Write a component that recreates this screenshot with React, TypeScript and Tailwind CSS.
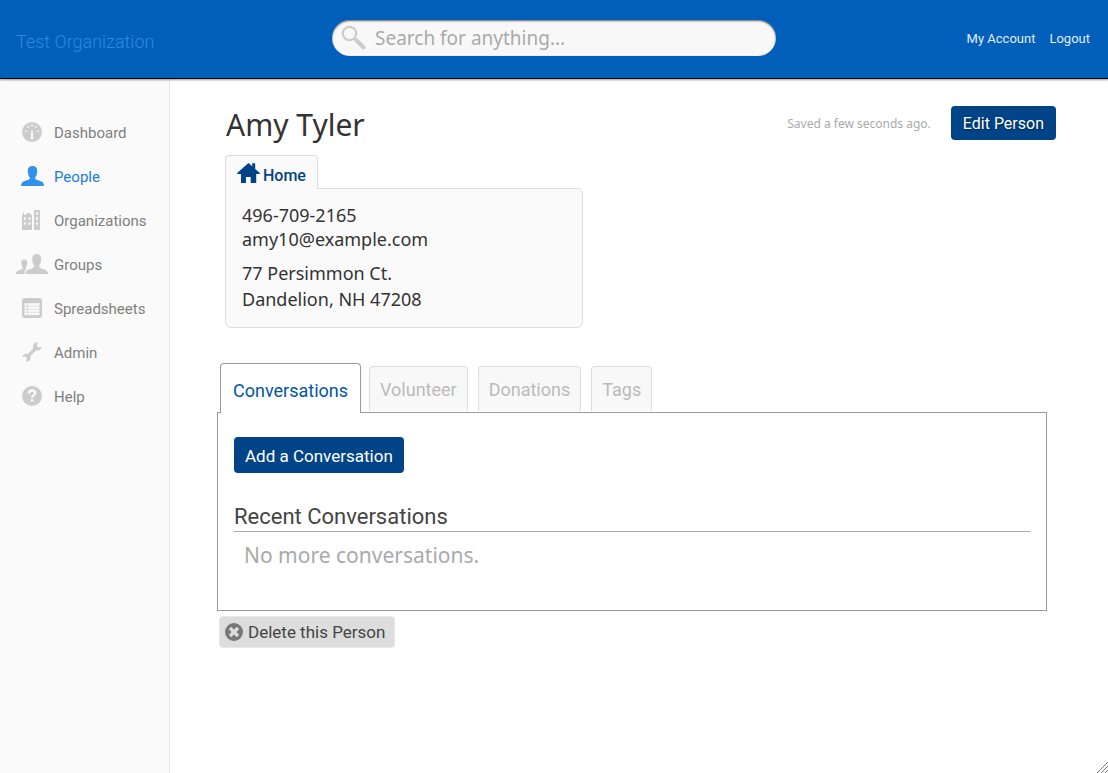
import React from "react";

type IconProps = { className?: string };

function DashboardIcon() {
  return (
    <svg width="20" height="20" viewBox="0 0 20 20" aria-hidden="true">
      <circle cx="10" cy="10" r="10" fill="currentColor" />
      <g fill="#fafafa">
        <path d="M9.6 7.5h.8l.9 8.6a1.3 1.3 0 0 1-2.6 0z" />
        <ellipse cx="10" cy="3.4" rx=".9" ry="1.1" />
        <circle cx="6.1" cy="5.1" r="1" />
        <circle cx="13.9" cy="5.1" r="1" />
        <ellipse cx="4.1" cy="9.2" rx="1.2" ry=".8" />
        <ellipse cx="15.9" cy="9.2" rx="1.2" ry=".8" />
      </g>
    </svg>
  );
}

function PersonIcon() {
  return (
    <svg width="24" height="20" viewBox="0 0 24 20" aria-hidden="true">
      <path
        fill="currentColor"
        d="M12.500 0c3.200 0 4.700 1.700 4.700 4.600 0 2.900-.6 5.600-2 7v1.200c1 1 3.100 1.500 5.200 2.300 2.500.9 3.600 2.400 3.600 4.900H1c0-2.500 1.100-4 3.600-4.900 2.100-.8 4.200-1.300 5.200-2.300v-1.200c-1.400-1.400-2-4.100-2-7C7.800 1.700 9.300 0 12.500 0z"
      />
    </svg>
  );
}

function BuildingsIcon() {
  return (
    <svg width="20" height="20" viewBox="0 0 20 20" aria-hidden="true">
      <path
        fill="currentColor"
        fillRule="evenodd"
        d="M0 5h1V2.500h1V5h2V4h1V3h3v1h1v1h1v15H0zM2 7.300v2.400h2V7.300zm4.500 0v2.400h2V7.300zM2 12.300v2.400h2v-2.400zm4.500 0v2.400h2v-2.400zM12 0h6v20h-6zM14 2.300v2.400h2V2.300zm0 5v2.400h2V7.300zm0 5v2.400h2v-2.400z"
      />
    </svg>
  );
}

function GroupIcon() {
  return (
    <svg width="32" height="20" viewBox="0 0 32 20" aria-hidden="true">
      <g fill="currentColor">
        <path d="M8.300 5.500c2 0 3.100 1.300 3.100 3.300 0 1.900-.6 3.500-1.500 4.500v1l.8.500c-1.600 1.200-2.300 2.700-2.400 5.200H0c0-2 1-3 2.500-3.500 1.700-.6 3.400-.9 4.200-2.200v-1c-.9-1-1.500-2.600-1.500-4.500 0-2 1.100-3.300 3.100-3.300z" />
        <path d="M20.700 0c3 0 4.500 1.900 4.500 4.700 0 2.800-.7 5.300-2 6.800v1.400c1 1.200 3.100 1.700 5.200 2.500 2.400.9 3.600 2.200 3.600 4.600H9.300c0-2.400 1.200-3.700 3.600-4.600 2.100-.8 4.300-1.300 5.300-2.500v-1.400c-1.300-1.500-2-4-2-6.800 0-2.800 1.500-4.700 4.500-4.700z" />
      </g>
    </svg>
  );
}

function SheetIcon() {
  return (
    <svg width="20" height="20" viewBox="0 0 20 20" aria-hidden="true">
      <rect width="20" height="20" rx="3" fill="currentColor" />
      <path fill="#fafafa" d="M2.500 5.200h15v12h-15z" />
      <path
        d="M2.500 8.200h15M2.500 11.200h15M2.500 14.200h15M5.500 5v12.500"
        stroke="currentColor"
        strokeWidth=".6"
      />
    </svg>
  );
}

function WrenchIcon() {
  return (
    <svg width="20" height="20" viewBox="0 0 20 20" aria-hidden="true">
      <path
        fill="currentColor"
        d="M16 .3c-2.800-.3-5 1.500-5 4.200 0 .8.200 1.300.4 1.900l-5.700 5.500c-2.300-.6-4.600.5-5.500 2.900l2.900-.2 1.800 1.700-.9 3.400c2.900.1 4.800-1.800 4.800-4.400 0-.6-.1-1-.3-1.500L14.100 8.300c2.500.8 5.200-.7 5.700-3.500l-3.100.7-2-1.700z"
      />
    </svg>
  );
}

function HelpIcon() {
  return (
    <svg width="20" height="20" viewBox="0 0 20 20" aria-hidden="true">
      <circle cx="10" cy="10" r="10" fill="currentColor" />
      <path
        d="M6.900 7.500c0-2 1.300-3 3.200-3 1.800 0 3 1 3 2.500 0 2.400-2.900 2.100-2.900 4.700"
        fill="none"
        stroke="#fafafa"
        strokeWidth="2.300"
      />
      <rect x="8.900" y="13.200" width="2.500" height="2.500" fill="#fafafa" />
    </svg>
  );
}

function SearchIcon({ className }: IconProps) {
  return (
    <svg className={className} width="26" height="26" viewBox="0 0 26 26" aria-hidden="true">
      <g fill="none" stroke="#cccccc">
        <circle cx="8.500" cy="8.500" r="6.700" strokeWidth="2.200" />
        <path d="M13 13.500l3 2.500" strokeWidth="2" />
        <path d="M15.500 15.500l7 6.700" strokeWidth="4.200" strokeLinecap="round" />
      </g>
    </svg>
  );
}

function HomeIcon() {
  return (
    <svg width="23" height="20" viewBox="0 0 23 20" aria-hidden="true">
      <path
        fill="currentColor"
        d="M11.500 0l3.700 3.300V.2h3v5.700l4.600 4.200v.9h-3.600v9h-5.500v-6H9v6H4v-9H.2v-.9z"
      />
    </svg>
  );
}

function RemoveIcon() {
  return (
    <svg width="18" height="18" viewBox="0 0 18 18" aria-hidden="true">
      <circle cx="9" cy="9" r="9" fill="#777777" />
      <path d="M5 5l8 8M13 5l-8 8" stroke="#dddddd" strokeWidth="3.400" />
    </svg>
  );
}

const navItems = [
  { label: "Dashboard", Icon: DashboardIcon },
  { label: "People", Icon: PersonIcon, active: true },
  { label: "Organizations", Icon: BuildingsIcon },
  { label: "Groups", Icon: GroupIcon },
  { label: "Spreadsheets", Icon: SheetIcon },
  { label: "Admin", Icon: WrenchIcon },
  { label: "Help", Icon: HelpIcon },
];

const otherTabs = ["Volunteer", "Donations", "Tags"];

function Header() {
  return (
    <header className="z-10 flex h-[79px] items-start border-b border-black bg-[#005fb8] font-['Roboto',sans-serif] shadow-[0_1px_2px_rgba(0,0,0,0.4)]">
      <div className="flex-1">
        <a
          href="#"
          className="block pt-7 pl-4 text-lg leading-7 font-light text-[#2a8ae6]"
        >
          Test Organization
        </a>
      </div>
      <form className="relative mt-5 w-[444px]" role="search">
        <SearchIcon className="absolute top-[5px] left-[9px]" />
        <input
          type="text"
          aria-label="Search"
          placeholder="Search for anything..."
          className="h-9 w-full rounded-full bg-[#f8f8f8] pr-4 pl-[43px] font-['Noto_Sans',sans-serif] text-[19px] text-[#333] shadow-[inset_0_1px_2px_rgba(0,0,0,0.6)] outline-none placeholder:text-[#aaaaaa]"
        />
      </form>
      <div className="flex-1">
        <nav className="flex justify-end gap-[14px] pt-[29px] pr-[18px] text-[13px] leading-5 text-[#e3edf7]">
          <a href="#">My Account</a>
          <a href="#">Logout</a>
        </nav>
      </div>
    </header>
  );
}

function Sidebar() {
  return (
    <nav className="w-[170px] shrink-0 border-r border-[#e8e8e8] bg-[#fafafa] pt-[31px] font-['Roboto',sans-serif]">
      <ul>
        {navItems.map(({ label, Icon, active }) => (
          <li key={label}>
            <a
              href="#"
              className={
                active
                  ? "flex h-11 items-center gap-[6px] pl-4 text-[15px] text-[#1a7cdc]"
                  : "flex h-11 items-center gap-[6px] pl-4 text-[15px] text-[#808080]"
              }
            >
              <span
                className={
                  active
                    ? "flex w-8 justify-center text-[#3391ee]"
                    : "flex w-8 justify-center text-[#cccccc]"
                }
              >
                <Icon />
              </span>
              <span className="pt-0.5">{label}</span>
            </a>
          </li>
        ))}
      </ul>
    </nav>
  );
}

function ContactCard() {
  return (
    <section className="mt-[15px] ml-2 w-[358px] max-w-full">
      <h2 className="relative -mb-px flex h-[34px] w-fit items-center gap-[3px] rounded-t border border-b-0 border-[#dddddd] bg-[#fafafa] px-[11px] pt-1 font-['Roboto',sans-serif] text-base font-medium text-[#004488]">
        <span className="pb-1">
          <HomeIcon />
        </span>
        <span className="pt-0.5">Home</span>
      </h2>
      <div className="rounded-md rounded-tl-none border border-[#dddddd] bg-[#fafafa] px-4 pt-[14px] pb-[15px] text-lg leading-6 text-[#333333]">
        <p>496-709-2165</p>
        <p>amy10@example.com</p>
        <address className="mt-[9px] leading-[26px] not-italic">
          77 Persimmon Ct.
          <br />
          Dandelion, NH 47208
        </address>
      </div>
    </section>
  );
}

function Activity() {
  return (
    <section className="mt-[35px] mr-[9px] font-['Roboto',sans-serif]">
      <div role="tablist" className="flex items-end pl-[3px]">
        <button
          type="button"
          role="tab"
          aria-selected="true"
          className="relative -mb-px mr-2 h-[50px] rounded-t border border-b-0 border-[#999999] bg-white px-3 pt-1 text-lg text-[#0055aa]"
        >
          Conversations
        </button>
        <div className="mb-px flex gap-[10px]">
          {otherTabs.map((tab) => (
            <button
              key={tab}
              type="button"
              role="tab"
              aria-selected="false"
              className="h-[45px] rounded-t border border-b-0 border-[#dddddd] bg-[#f8f8f8] px-[10px] pt-0.5 text-lg text-[#bbbbbb]"
            >
              {tab}
            </button>
          ))}
        </div>
      </div>
      <div role="tabpanel" className="border border-[#999999] px-4 pt-6 pb-[38px]">
        <button
          type="button"
          className="h-9 rounded bg-[#004488] px-[11px] pt-1 text-[17px] text-white"
        >
          Add a Conversation
        </button>
        <h2 className="mt-[30px] border-b border-[#aaaaaa] text-[22px] leading-7 text-[#444444]">
          Recent Conversations
        </h2>
        <p className="mt-[7px] pl-[10px] font-['Noto_Sans',sans-serif] text-[21px] leading-[33px] text-[#aaaaaa]">
          No more conversations.
        </p>
      </div>
      <button
        type="button"
        className="mt-[5px] ml-[2px] flex h-8 items-center gap-[5px] rounded-sm border border-[#e8e8e8] bg-[#dddddd] pr-[9px] pl-[5px] text-[17px] text-[#444444]"
      >
        <RemoveIcon />
        <span className="pt-0.5">Delete this Person</span>
      </button>
    </section>
  );
}

export default function App() {
  return (
    <div className="relative flex min-h-screen flex-col bg-white font-['Noto_Sans',sans-serif]">
      <Header />
      <div className="flex flex-1">
        <Sidebar />
        <main className="min-w-0 flex-1 pt-[27px] pr-[52px] pb-8 pl-[47px]">
          <div className="flex items-center pl-[9px]">
            <h1 className="flex-1 pt-1 text-3xl leading-[30px] text-[#333333]">Amy Tyler</h1>
            <p className="mr-5 pt-0.5 text-xs text-[#aaaaaa]">Saved a few seconds ago.</p>
            <button
              type="button"
              className="h-[34px] rounded bg-[#004488] px-3 pt-0.5 font-['Roboto',sans-serif] text-base text-white [text-shadow:1px_1px_2px_rgba(0,0,0,0.5)]"
            >
              Edit Person
            </button>
          </div>
          <ContactCard />
          <Activity />
        </main>
      </div>
      <svg
        className="absolute right-0 bottom-0"
        width="11"
        height="11"
        viewBox="0 0 11 11"
        aria-hidden="true"
      >
        <path d="M0 11L11 0M4 11l7-7M8 11l3-3" stroke="#777777" strokeWidth="1" />
      </svg>
    </div>
  );
}
